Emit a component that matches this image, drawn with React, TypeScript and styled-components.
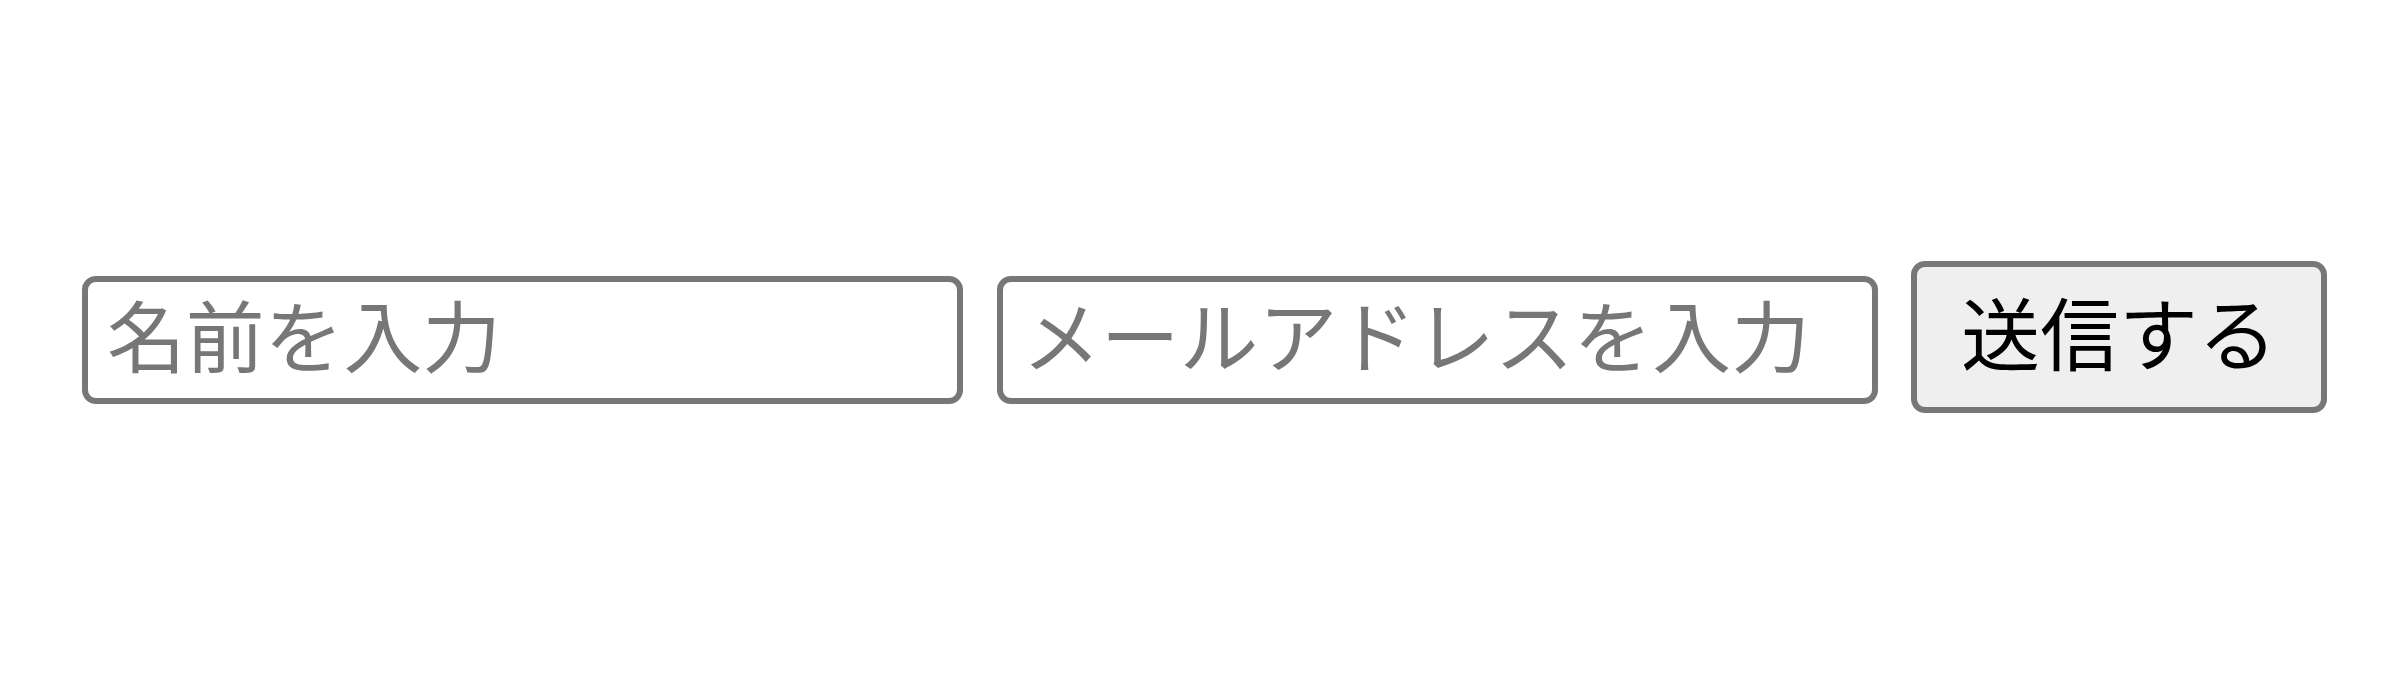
import styled, { createGlobalStyle } from 'styled-components';

const GlobalStyle = createGlobalStyle`
  html, body {
    margin: 0;
    padding: 0;
    background: #ffffff;
  }
  body {
    font-family: "Noto Sans CJK JP", "Noto Sans", sans-serif;
  }
`;

function App() {
  return (
    <>
      <GlobalStyle />
      <Page>
        <ContactForm onSubmit={(e) => e.preventDefault()}>
          <TextField type="text" placeholder="名前を入力" />
          <TextField type="email" placeholder="メールアドレスを入力" />
          <SubmitButton type="submit">送信する</SubmitButton>
        </ContactForm>
      </Page>
    </>
  );
}

export default App;

const Page = styled.div`
  width: 2400px;
  height: 674px;
  display: flex;
  align-items: center;
  box-sizing: border-box;
  padding: 0 0 0 82px;
`;

const ContactForm = styled.form`
  display: flex;
  align-items: center;
  gap: 34px;
`;

const TextField = styled.input`
  box-sizing: border-box;
  width: 881px;
  height: 128px;
  margin-top: 6px;
  padding: 0 19px 14px;
  border: 6px solid #777777;
  border-radius: 14px;
  background: #ffffff;
  font-family: "Noto Sans CJK JP", "Noto Sans", sans-serif;
  font-size: 78.8px;
  color: #222222;
  outline: none;
  &::placeholder {
    color: #777777;
    opacity: 1;
  }
`;

const SubmitButton = styled.button`
  box-sizing: border-box;
  width: 416px;
  height: 152px;
  margin-left: -1px;
  padding: 0 0 14px;
  border: 6px solid #777777;
  border-radius: 14px;
  background: #efefef;
  font-family: "Noto Sans CJK JP", "Noto Sans", sans-serif;
  font-size: 79px;
  color: #000000;
  cursor: pointer;
`;
